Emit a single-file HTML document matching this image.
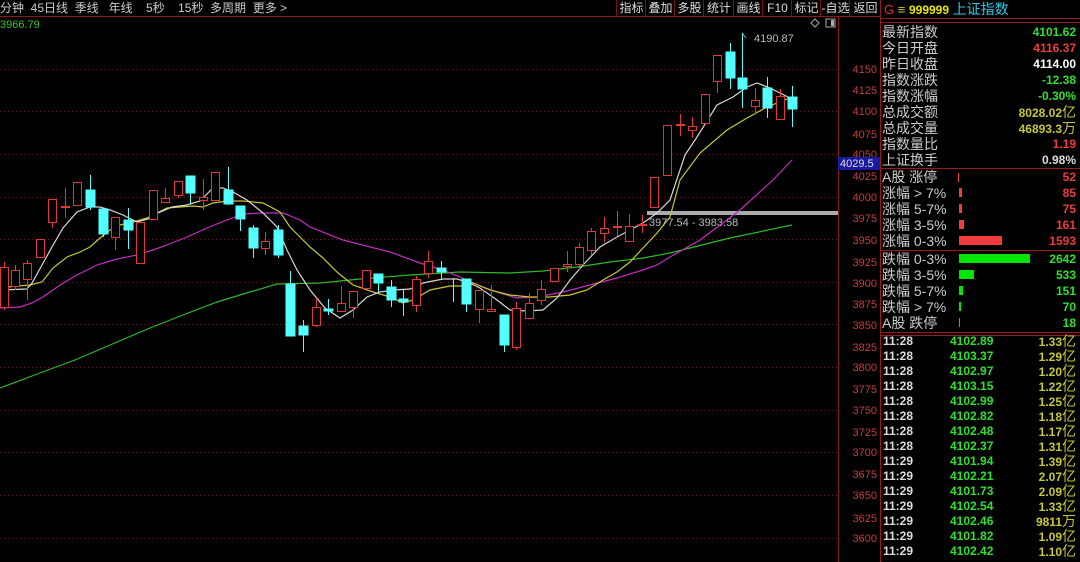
<!DOCTYPE html>
<html><head><meta charset="utf-8"><style>
body{margin:0;background:#000;width:1080px;height:562px;overflow:hidden;position:relative;font-family:"Liberation Sans","Noto Sans CJK SC",sans-serif;}
.a{position:absolute;white-space:nowrap}
.tb{position:absolute;top:0;height:17px;font-size:12px;color:#ccc;line-height:16px}
.btn{position:absolute;top:0;height:17px;border-left:1px solid #7a1010;font-size:12px;color:#ddd;text-align:center;line-height:16px}
.row{position:absolute;left:882px;width:196px;height:16px;font-size:14px;line-height:16px;color:#ccc}
.row .v{position:absolute;right:2px;top:0;font-weight:bold;font-size:12px;font-family:"Liberation Sans","Noto Sans CJK SC",sans-serif}
.t{position:absolute;left:882px;width:196px;height:15px;font-size:12px;line-height:15px;font-weight:bold}
.t span{position:absolute}
.t i{font-style:normal;font-weight:normal;font-size:14px}
</style></head><body>
<div class="tb" style="left:0">分钟&nbsp;&nbsp;45日线&nbsp;&nbsp;季线&nbsp;&nbsp;&nbsp;年线&nbsp;&nbsp;&nbsp;&nbsp;5秒&nbsp;&nbsp;&nbsp;&nbsp;15秒&nbsp;&nbsp;多周期&nbsp;&nbsp;更多 &gt;</div>
<div class="btn" style="left:616px;width:29px">指标</div>
<div class="btn" style="left:645px;width:29px">叠加</div>
<div class="btn" style="left:674px;width:29px">多股</div>
<div class="btn" style="left:703px;width:30px">统计</div>
<div class="btn" style="left:733px;width:29px">画线</div>
<div class="btn" style="left:762px;width:29px">F10</div>
<div class="btn" style="left:791px;width:29px">标记</div>
<div class="btn" style="left:820px;width:29px">-自选</div>
<div class="btn" style="left:849px;width:31px">返回</div>
<svg class="a" style="left:0;top:0" width="1080" height="562">
<line x1="0" y1="16.5" x2="880" y2="16.5" stroke="#8a1a1a"/>
<line x1="838.5" y1="17" x2="838.5" y2="562" stroke="#8a1a1a"/>
<line x1="880.5" y1="0" x2="880.5" y2="562" stroke="#9a1a1a"/>
<g stroke="#6a1818" stroke-dasharray="1 3">
<line x1="0" y1="69.5" x2="838" y2="69.5"/><line x1="0" y1="111.5" x2="838" y2="111.5"/><line x1="0" y1="154.5" x2="838" y2="154.5"/><line x1="0" y1="197.5" x2="838" y2="197.5"/><line x1="0" y1="239.5" x2="838" y2="239.5"/><line x1="0" y1="282.5" x2="838" y2="282.5"/><line x1="0" y1="324.5" x2="838" y2="324.5"/><line x1="0" y1="367.5" x2="838" y2="367.5"/><line x1="0" y1="410.5" x2="838" y2="410.5"/><line x1="0" y1="452.5" x2="838" y2="452.5"/><line x1="0" y1="495.5" x2="838" y2="495.5"/><line x1="0" y1="538.5" x2="838" y2="538.5"/>
</g>
<g fill="#c83c3c" font-size="11" text-anchor="end" font-family="Liberation Sans">
<text x="877" y="73">4150</text><text x="877" y="94">4125</text><text x="877" y="115">4100</text><text x="877" y="138">4075</text><text x="877" y="158">4050</text><text x="877" y="180">4025</text><text x="877" y="201">4000</text><text x="877" y="222">3975</text><text x="877" y="244">3950</text><text x="877" y="266">3925</text><text x="877" y="287">3900</text><text x="877" y="308">3875</text><text x="877" y="329">3850</text><text x="877" y="351">3825</text><text x="877" y="371">3800</text><text x="877" y="393">3775</text><text x="877" y="414">3750</text><text x="877" y="436">3725</text><text x="877" y="456">3700</text><text x="877" y="478">3675</text><text x="877" y="499">3650</text><text x="877" y="522">3625</text><text x="877" y="542">3600</text>
</g>
<rect x="838" y="157" width="42" height="13" fill="#1a1aa0"/>
<text x="840" y="167" fill="#ddd" font-size="11" font-family="Liberation Sans">4029.5</text>
<text x="0" y="28" fill="#2ec82e" font-size="11" font-family="Liberation Sans">3966.79</text>
<path d="M811 23l4-4 4 4-4 4z" fill="none" stroke="#aaa"/>
<rect x="826" y="19" width="9" height="8" fill="none" stroke="#aaa"/><rect x="831" y="20" width="3" height="6" fill="#aaa"/>
<rect x="647" y="211" width="191" height="4" fill="#aaa"/>
<text x="649" y="226" fill="#bbb" font-size="11" font-family="Liberation Sans">3977.54 - 3983.58</text>
<path d="M742 33l4 5" stroke="#aaa" fill="none"/>
<text x="754" y="42" fill="#bbb" font-size="11" font-family="Liberation Sans">4190.87</text>
<g fill="none" stroke-width="1.2">
<polyline stroke="#2db82d" points="0,388 40,373 75,360 110,345 150,328 183,315 217,302 250,292 277,284 320,283 360,279 410,275 460,272 510,273 543,271 577,267 610,262 643,258 670,253 730,238 792,225"/>
<polyline stroke="#c030c0" points="0,308 20,307 32,303 43,297 60,285 77,275 97,265 117,259 137,255 153,250 167,245 187,237 207,228 227,220 243,214 263,213 283,213 300,220 310,227 343,240 390,252 420,263 443,270 467,280 483,287 500,293 517,298 537,297 563,292 590,285 617,278 643,270 657,265 670,257 700,240 740,210 773,180 792,160"/>
<polyline stroke="#c8c832" points="0,288 17,286 30,285 42,282 53,268 67,257 80,252 90,247 100,238 110,230 120,225 133,222 147,218 157,213 167,208 180,207 193,206 203,207 213,203 227,201 243,201 263,203 280,212 290,227 300,237 310,247 323,258 337,272 353,285 373,292 390,297 403,303 413,300 430,290 450,286 463,286 473,283 490,290 510,295 530,297 550,297 570,295 587,290 603,280 617,272 630,262 643,248 657,233 670,217 680,180 700,153 727,130 747,118 767,107 790,98"/>
<polyline stroke="#d8d8d8" points="0,290 27,289 32,283 52,247 63,228 77,212 90,207 100,207 110,210 123,215 137,222 148,219 158,213 172,207 187,205 200,201 213,188 223,188 233,192 247,200 263,213 277,227 287,250 297,270 310,290 325,308 340,318 353,310 367,297 380,292 393,290 410,289 423,283 443,279 457,279 467,282 480,288 497,300 510,310 527,311 543,310 557,298 570,280 583,265 600,247 617,237 630,230 643,223 657,213 670,200 685,155 697,137 717,105 733,97 747,87 757,83 770,88 790,98"/>
</g>
</svg>
<svg class="a" style="left:0;top:0" width="838" height="562">
<g stroke-width="1">
<g stroke="#e03838" fill="#000">
<line x1="4.5" y1="262" x2="4.5" y2="310"/><rect x="0.5" y="267.5" width="8" height="40"/>
<line x1="15.5" y1="265" x2="15.5" y2="290"/><rect x="11.5" y="270.5" width="8" height="16"/>
<line x1="27.5" y1="260" x2="27.5" y2="300"/><rect x="23.5" y="263.5" width="8" height="16"/>
<rect x="36.5" y="239.5" width="8" height="18"/>
<line x1="52.5" y1="199" x2="52.5" y2="228"/><rect x="48.5" y="199.5" width="8" height="23"/>
<line x1="65.5" y1="188" x2="65.5" y2="218"/><rect x="61.5" y="206.5" width="8" height="1"/>
<rect x="73.5" y="182.5" width="8" height="23"/>
<line x1="115.5" y1="217" x2="115.5" y2="250"/><rect x="111.5" y="217.5" width="8" height="20"/>
<rect x="136.5" y="222.5" width="8" height="41"/>
<rect x="149.5" y="190.5" width="8" height="29"/>
<line x1="165.5" y1="188" x2="165.5" y2="202"/><rect x="161.5" y="198.5" width="8" height="4"/>
<line x1="178.5" y1="181" x2="178.5" y2="198"/><rect x="174.5" y="181.5" width="8" height="14"/>
<line x1="203.5" y1="179" x2="203.5" y2="210"/><rect x="199.5" y="197.5" width="8" height="3"/>
<rect x="211.5" y="172.5" width="8" height="28"/>
<line x1="265.5" y1="232" x2="265.5" y2="255"/><rect x="261.5" y="241.5" width="8" height="7"/>
<line x1="316.5" y1="298" x2="316.5" y2="327"/><rect x="312.5" y="307.5" width="8" height="18"/>
<line x1="341.5" y1="286" x2="341.5" y2="311"/><rect x="337.5" y="303.5" width="8" height="8"/>
<line x1="353.5" y1="291" x2="353.5" y2="318"/><rect x="349.5" y="291.5" width="8" height="16"/>
<rect x="362.5" y="270.5" width="8" height="18"/>
<line x1="416.5" y1="276" x2="416.5" y2="312"/><rect x="412.5" y="279.5" width="8" height="26"/>
<line x1="428.5" y1="251" x2="428.5" y2="278"/><rect x="424.5" y="261.5" width="8" height="12"/>
<line x1="479.5" y1="290" x2="479.5" y2="323"/><rect x="475.5" y="290.5" width="8" height="19"/>
<line x1="491.5" y1="285" x2="491.5" y2="312"/><rect x="487.5" y="309.5" width="8" height="2"/>
<line x1="516.5" y1="302" x2="516.5" y2="350"/><rect x="512.5" y="308.5" width="8" height="39"/>
<line x1="529.5" y1="293" x2="529.5" y2="318"/><rect x="525.5" y="303.5" width="8" height="15"/>
<line x1="541.5" y1="280" x2="541.5" y2="305"/><rect x="537.5" y="289.5" width="8" height="11"/>
<rect x="550.5" y="268.5" width="8" height="13"/>
<line x1="567.5" y1="251" x2="567.5" y2="272"/><rect x="563.5" y="264.5" width="8" height="2"/>
<line x1="579.5" y1="243" x2="579.5" y2="270"/><rect x="575.5" y="247.5" width="8" height="17"/>
<line x1="591.5" y1="228" x2="591.5" y2="255"/><rect x="587.5" y="231.5" width="8" height="19"/>
<line x1="604.5" y1="217" x2="604.5" y2="242"/><rect x="600.5" y="228.5" width="8" height="5"/>
<line x1="617.5" y1="211" x2="617.5" y2="236"/><rect x="613.5" y="226.5" width="8" height="1"/>
<line x1="629.5" y1="214" x2="629.5" y2="242"/><rect x="625.5" y="226.5" width="8" height="15"/>
<line x1="642.5" y1="215" x2="642.5" y2="233"/><rect x="638.5" y="224.5" width="8" height="1"/>
<rect x="650.5" y="177.5" width="8" height="30"/>
<rect x="663.5" y="125.5" width="8" height="50"/>
<line x1="680.5" y1="114" x2="680.5" y2="136"/><rect x="676.5" y="124.5" width="8" height="1"/>
<line x1="692.5" y1="117" x2="692.5" y2="138"/><rect x="688.5" y="126.5" width="8" height="4"/>
<rect x="701.5" y="94.5" width="8" height="29"/>
<line x1="717.5" y1="55" x2="717.5" y2="93"/><rect x="713.5" y="55.5" width="8" height="26"/>
<line x1="755.5" y1="88" x2="755.5" y2="114"/><rect x="751.5" y="100.5" width="8" height="6"/>
<line x1="780.5" y1="89" x2="780.5" y2="119"/><rect x="776.5" y="96.5" width="8" height="23"/>
</g>
<g stroke="#54ffff" fill="#54ffff">
<line x1="90.5" y1="175" x2="90.5" y2="210"/><rect x="86" y="190" width="9" height="17"/>
<line x1="103.5" y1="209" x2="103.5" y2="237"/><rect x="99" y="209" width="9" height="25"/>
<line x1="128.5" y1="208" x2="128.5" y2="249"/><rect x="124" y="220" width="9" height="10"/>
<line x1="190.5" y1="176" x2="190.5" y2="204"/><rect x="186" y="176" width="9" height="17"/>
<line x1="228.5" y1="167" x2="228.5" y2="205"/><rect x="224" y="190" width="9" height="14"/>
<line x1="240.5" y1="206" x2="240.5" y2="231"/><rect x="236" y="206" width="9" height="13"/>
<line x1="253.5" y1="225" x2="253.5" y2="258"/><rect x="249" y="228" width="9" height="20"/>
<line x1="278.5" y1="225" x2="278.5" y2="258"/><rect x="274" y="230" width="9" height="25"/>
<line x1="290.5" y1="271" x2="290.5" y2="336"/><rect x="286" y="284" width="9" height="52"/>
<line x1="303.5" y1="320" x2="303.5" y2="352"/><rect x="299" y="326" width="9" height="9"/>
<line x1="328.5" y1="299" x2="328.5" y2="315"/><rect x="324" y="309" width="9" height="2"/>
<line x1="378.5" y1="274" x2="378.5" y2="292"/><rect x="374" y="274" width="9" height="9"/>
<line x1="391.5" y1="280" x2="391.5" y2="307"/><rect x="387" y="287" width="9" height="13"/>
<line x1="403.5" y1="290" x2="403.5" y2="316"/><rect x="399" y="299" width="9" height="3"/>
<line x1="441.5" y1="261" x2="441.5" y2="279"/><rect x="437" y="268" width="9" height="4"/>
<line x1="453.5" y1="278" x2="453.5" y2="302"/>
<line x1="466.5" y1="279" x2="466.5" y2="312"/><rect x="462" y="279" width="9" height="25"/>
<line x1="504.5" y1="315" x2="504.5" y2="352"/><rect x="500" y="315" width="9" height="30"/>
<line x1="730.5" y1="43" x2="730.5" y2="89"/><rect x="726" y="52" width="9" height="26"/>
<line x1="742.5" y1="33" x2="742.5" y2="108"/><rect x="738" y="78" width="9" height="11"/>
<line x1="767.5" y1="77" x2="767.5" y2="118"/><rect x="763" y="88" width="9" height="20"/>
<line x1="792.5" y1="86" x2="792.5" y2="127"/><rect x="788" y="97" width="9" height="12"/>
</g>
</g>
</svg>
<svg class="a" style="left:880px;top:0" width="200" height="562">
<g stroke="#9a1a1a"><line x1="0" y1="18.5" x2="200" y2="18.5"/><line x1="0" y1="22.5" x2="200" y2="22.5"/><line x1="0" y1="168.5" x2="200" y2="168.5"/><line x1="0" y1="250.5" x2="200" y2="250.5"/><line x1="0" y1="332.5" x2="200" y2="332.5"/><line x1="0" y1="335.5" x2="200" y2="335.5"/></g>
<rect x="78" y="173" width="1" height="9" fill="#f03c3c"/>
<rect x="79" y="188" width="3" height="9" fill="#f03c3c"/>
<rect x="79" y="204" width="3" height="9" fill="#f03c3c"/>
<rect x="79" y="220" width="5" height="9" fill="#f03c3c"/>
<rect x="79" y="236" width="43" height="9" fill="#f03c3c"/>
<rect x="79" y="254" width="71" height="9" fill="#00e600"/>
<rect x="79" y="270" width="15" height="9" fill="#00e600"/>
<rect x="79" y="286" width="4" height="9" fill="#00e600"/>
<rect x="79" y="302" width="2" height="9" fill="#00e600"/>
<rect x="79" y="318" width="1" height="9" fill="#00e600"/>
</svg>
<div class="a" style="left:884px;top:1px;font-size:13px;line-height:16px"><span style="color:#e03030">G</span> <span style="color:#c8c832">≡</span> <b style="color:#e8e800;font-size:12px">999999</b> <span style="color:#30c8e8;font-size:14px">上证指数</span></div>
<div class="row" style="top:24px">最新指数<span class="v" style="color:#2ee02e">4101.62</span></div>
<div class="row" style="top:40px">今日开盘<span class="v" style="color:#f03c3c">4116.37</span></div>
<div class="row" style="top:56px">昨日收盘<span class="v" style="color:#fff">4114.00</span></div>
<div class="row" style="top:72px">指数涨跌<span class="v" style="color:#2ee02e">-12.38</span></div>
<div class="row" style="top:88px">指数涨幅<span class="v" style="color:#2ee02e">-0.30%</span></div>
<div class="row" style="top:104px">总成交额<span class="v" style="color:#c8c832">8028.02<span style="font-weight:normal;font-size:14px">亿</span></span></div>
<div class="row" style="top:120px">总成交量<span class="v" style="color:#c8c832">46893.3<span style="font-weight:normal;font-size:14px">万</span></span></div>
<div class="row" style="top:136px">指数量比<span class="v" style="color:#f03c3c">1.19</span></div>
<div class="row" style="top:152px">上证换手<span class="v" style="color:#ddd">0.98%</span></div>
<div class="row" style="top:169px">A股 涨停<span class="v" style="color:#f03c3c">52</span></div>
<div class="row" style="top:185px">涨幅 &gt; 7%<span class="v" style="color:#f03c3c">85</span></div>
<div class="row" style="top:201px">涨幅 5-7%<span class="v" style="color:#f03c3c">75</span></div>
<div class="row" style="top:217px">涨幅 3-5%<span class="v" style="color:#f03c3c">161</span></div>
<div class="row" style="top:233px">涨幅 0-3%<span class="v" style="color:#f03c3c">1593</span></div>
<div class="row" style="top:251px">跌幅 0-3%<span class="v" style="color:#2ee02e">2642</span></div>
<div class="row" style="top:267px">跌幅 3-5%<span class="v" style="color:#2ee02e">533</span></div>
<div class="row" style="top:283px">跌幅 5-7%<span class="v" style="color:#2ee02e">151</span></div>
<div class="row" style="top:299px">跌幅 &gt; 7%<span class="v" style="color:#2ee02e">70</span></div>
<div class="row" style="top:315px">A股 跌停<span class="v" style="color:#2ee02e">18</span></div>
<div class="t" style="top:334px"><span style="left:1px;color:#ddd">11:28</span><span style="left:68px;color:#2ee02e">4102.89</span><span style="right:2px;color:#c8c832">1.33<i>亿</i></span></div>
<div class="t" style="top:349px"><span style="left:1px;color:#ddd">11:28</span><span style="left:68px;color:#2ee02e">4103.37</span><span style="right:2px;color:#c8c832">1.29<i>亿</i></span></div>
<div class="t" style="top:364px"><span style="left:1px;color:#ddd">11:28</span><span style="left:68px;color:#2ee02e">4102.97</span><span style="right:2px;color:#c8c832">1.20<i>亿</i></span></div>
<div class="t" style="top:379px"><span style="left:1px;color:#ddd">11:28</span><span style="left:68px;color:#2ee02e">4103.15</span><span style="right:2px;color:#c8c832">1.22<i>亿</i></span></div>
<div class="t" style="top:394px"><span style="left:1px;color:#ddd">11:28</span><span style="left:68px;color:#2ee02e">4102.99</span><span style="right:2px;color:#c8c832">1.25<i>亿</i></span></div>
<div class="t" style="top:409px"><span style="left:1px;color:#ddd">11:28</span><span style="left:68px;color:#2ee02e">4102.82</span><span style="right:2px;color:#c8c832">1.18<i>亿</i></span></div>
<div class="t" style="top:424px"><span style="left:1px;color:#ddd">11:28</span><span style="left:68px;color:#2ee02e">4102.48</span><span style="right:2px;color:#c8c832">1.17<i>亿</i></span></div>
<div class="t" style="top:439px"><span style="left:1px;color:#ddd">11:28</span><span style="left:68px;color:#2ee02e">4102.37</span><span style="right:2px;color:#c8c832">1.31<i>亿</i></span></div>
<div class="t" style="top:454px"><span style="left:1px;color:#ddd">11:29</span><span style="left:68px;color:#2ee02e">4101.94</span><span style="right:2px;color:#c8c832">1.39<i>亿</i></span></div>
<div class="t" style="top:469px"><span style="left:1px;color:#ddd">11:29</span><span style="left:68px;color:#2ee02e">4102.21</span><span style="right:2px;color:#c8c832">2.07<i>亿</i></span></div>
<div class="t" style="top:484px"><span style="left:1px;color:#ddd">11:29</span><span style="left:68px;color:#2ee02e">4101.73</span><span style="right:2px;color:#c8c832">2.09<i>亿</i></span></div>
<div class="t" style="top:499px"><span style="left:1px;color:#ddd">11:29</span><span style="left:68px;color:#2ee02e">4102.54</span><span style="right:2px;color:#c8c832">1.33<i>亿</i></span></div>
<div class="t" style="top:514px"><span style="left:1px;color:#ddd">11:29</span><span style="left:68px;color:#2ee02e">4102.46</span><span style="right:2px;color:#c8c832">9811<i>万</i></span></div>
<div class="t" style="top:529px"><span style="left:1px;color:#ddd">11:29</span><span style="left:68px;color:#2ee02e">4101.82</span><span style="right:2px;color:#c8c832">1.09<i>亿</i></span></div>
<div class="t" style="top:544px"><span style="left:1px;color:#ddd">11:29</span><span style="left:68px;color:#2ee02e">4102.42</span><span style="right:2px;color:#c8c832">1.10<i>亿</i></span></div>
</body></html>
